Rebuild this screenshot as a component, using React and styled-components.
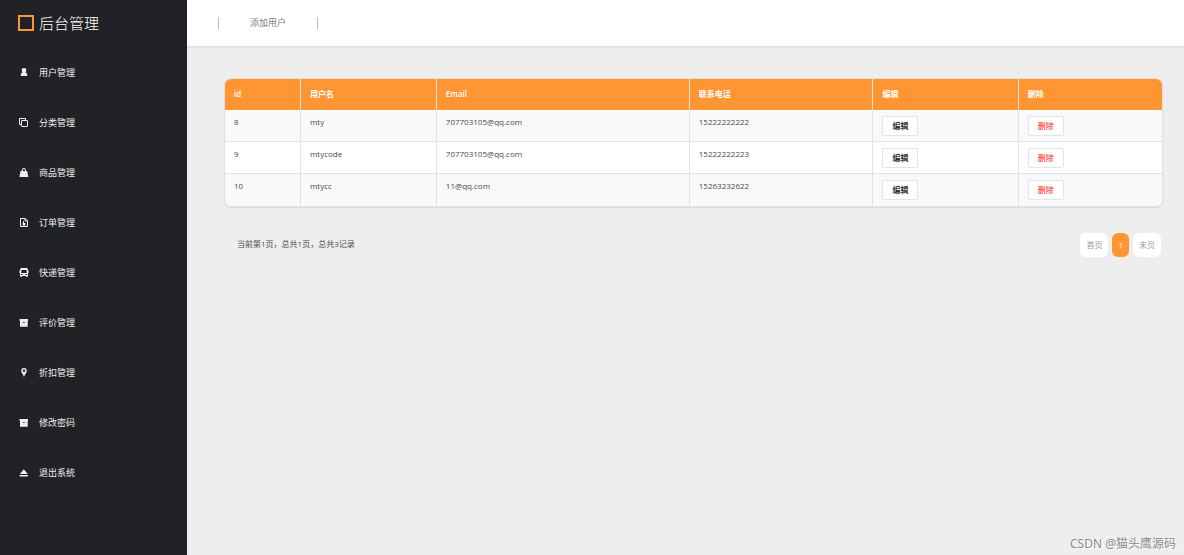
import React from "react";
import styled, { createGlobalStyle, ThemeProvider } from "styled-components";

const theme = {
  primary: "#ff9633",
  sidebar: "#212225",
  bg: "#eeeeee",
  line: "#e2e2e2",
  text: "#4a4a4a",
};

const icons = {
  user: (
    <path d="M5 0c1.500 0 2.300.9 2.300 2.200 0 .9-.3 1.500-.8 2C7.500 4.700 8.200 5.600 8.200 7v1H1.800V7c0-1.400.7-2.300 1.700-2.800-.5-.5-.8-1.100-.8-2C2.700.9 3.500 0 5 0z" />
  ),
  copy: (
    <g fill="none" stroke="currentColor">
      <rect x="2.500" y="2.500" width="6" height="6" rx=".5" />
      <path d="M2.500 6.500h-2v-6h6v2" />
    </g>
  ),
  bag: (
    <path
      fillRule="evenodd"
      d="M2.700 3C2.700 1 3.500 0 4.900 0S7 1 7 3h1.200L9.300 9H.4l1.100-6zm1 0H6c0-1.300-.3-2-1.100-2s-1.200.7-1.200 2z"
    />
  ),
  order: (
    <g>
      <path
        fill="none"
        stroke="currentColor"
        d="M1.500.5h4.700l2.300 2.200v5.800h-7zM6 .5v2.500h2.500"
      />
      <path d="M4 3h1v2h1.500v2.500h-3V5H4z" />
    </g>
  ),
  bus: (
    <path
      fillRule="evenodd"
      d="M2.500 0h5C8.400 0 9 .7 9 1.800v6.200h-.5v1H7V8H3v1H1.500V8H1V1.800C1 .7 1.600 0 2.500 0zM2.600 2L2.200 5h5.600l-.4-3zM2 6v1h1.500V6zm4.500 0v1H8V6zM.4 2.500H1V5H.4zM9 2.500h.6V5H9z"
    />
  ),
  archive: (
    <path
      fillRule="evenodd"
      d="M.5 1H9v2H.5zM1 3h7.700v5.800H1zM3.800 4v.8h2V4z"
    />
  ),
  pin: (
    <path
      fillRule="evenodd"
      d="M5 0c1.700 0 2.800 1.200 2.800 2.800C7.800 4.800 6 6 5 9 4 6 2.200 4.800 2.200 2.800 2.200 1.200 3.300 0 5 0zm0 1.600a1.200 1.200 0 100 2.400 1.200 1.200 0 000-2.400z"
    />
  ),
  eject: <path d="M4.800 1.300L8.800 6H.8zM.7 7h8.200v1.500H.7z" />,
};

const menu = [
  { icon: "user", name: "用户管理" },
  { icon: "copy", name: "分类管理" },
  { icon: "bag", name: "商品管理" },
  { icon: "order", name: "订单管理" },
  { icon: "bus", name: "快递管理" },
  { icon: "archive", name: "评价管理" },
  { icon: "pin", name: "折扣管理" },
  { icon: "archive", name: "修改密码" },
  { icon: "eject", name: "退出系统" },
];

const columns = [
  { name: "id", width: "8%" },
  { name: "用户名", width: "14.5%" },
  { name: "Email", width: "27%" },
  { name: "联系电话", width: "19.6%" },
  { name: "编辑", width: "15.5%" },
  { name: "删除", width: "15.4%" },
];

const users = [
  { id: 8, name: "mty", email: "707703105@qq.com", phone: "15222222222" },
  { id: 9, name: "mtycode", email: "707703105@qq.com", phone: "15222222223" },
  { id: 10, name: "mtycc", email: "11@qq.com", phone: "15263232622" },
];

function App() {
  return (
    <ThemeProvider theme={theme}>
      <GlobalStyle />
      <Layout>
        <Sidebar>
          <Brand>
            <BrandMark />
            后台管理
          </Brand>
          <Menu>
            {menu.map((item) => (
              <li key={item.name}>
                <MenuLink href="#">
                  <svg viewBox="0 0 10 10" aria-hidden="true">
                    {icons[item.icon]}
                  </svg>
                  {item.name}
                </MenuLink>
              </li>
            ))}
          </Menu>
        </Sidebar>
        <Main>
          <Topbar>
            <TopLink href="#">添加用户</TopLink>
          </Topbar>
          <Content>
            <TableCard>
              <Table>
                <thead>
                  <tr>
                    {columns.map((col) => (
                      <Th key={col.name} $width={col.width}>
                        {col.name}
                      </Th>
                    ))}
                  </tr>
                </thead>
                <tbody>
                  {users.map((user) => (
                    <tr key={user.id}>
                      <Td>{user.id}</Td>
                      <Td>{user.name}</Td>
                      <Td>{user.email}</Td>
                      <Td>{user.phone}</Td>
                      <Td>
                        <RowButton type="button">编辑</RowButton>
                      </Td>
                      <Td>
                        <RowButton type="button" $danger>
                          删除
                        </RowButton>
                      </Td>
                    </tr>
                  ))}
                </tbody>
              </Table>
            </TableCard>
            <TableFooter>
              <p>当前第1页，总共1页，总共3记录</p>
              <Pagination>
                <PageLink href="#">首页</PageLink>
                <PageLink href="#" $active>
                  1
                </PageLink>
                <PageLink href="#">末页</PageLink>
              </Pagination>
            </TableFooter>
          </Content>
        </Main>
        <Watermark>CSDN @猫头鹰源码</Watermark>
      </Layout>
    </ThemeProvider>
  );
}

const GlobalStyle = createGlobalStyle`
  * {
    box-sizing: border-box;
    margin: 0;
    padding: 0;
  }

  body {
    background: ${theme.bg};
    color: ${theme.text};
    font-family: "Open Sans", "Noto Sans CJK SC", sans-serif;
    font-size: 8px;
    line-height: 12px;
  }

  a {
    text-decoration: none;
  }

  button {
    font-family: inherit;
    cursor: pointer;
  }
`;

const Layout = styled.div`
  position: relative;
  display: flex;
  min-height: 100vh;
`;

const Sidebar = styled.aside`
  flex: 0 0 187px;
  background: ${(props) => props.theme.sidebar};
`;

const Brand = styled.h1`
  display: flex;
  align-items: center;
  gap: 5px;
  height: 46px;
  padding-left: 18px;
  color: #ffffff;
  font-size: 15px;
  font-weight: 300;
`;

const BrandMark = styled.span`
  width: 16px;
  height: 16px;
  border: 2px solid ${(props) => props.theme.primary};
`;

const Menu = styled.ul`
  list-style: none;
  padding-top: 2px;
`;

const MenuLink = styled.a`
  display: flex;
  align-items: center;
  gap: 10px;
  height: 50px;
  padding-left: 19px;
  color: #eeeeee;
  font-size: 9px;

  svg {
    width: 10px;
    height: 10px;
    fill: currentColor;
  }
`;

const Main = styled.main`
  flex: 1;
  min-width: 0;
`;

const Topbar = styled.nav`
  display: flex;
  align-items: center;
  height: 46px;
  padding-left: 31px;
  background: #ffffff;
  box-shadow: 0 1px 2px rgba(0, 0, 0, 0.1);
`;

const TopLink = styled.a`
  padding: 0 31px;
  border: solid #bbbbbb;
  border-width: 0 1px;
  color: #808080;
  font-size: 9px;
`;

const Content = styled.section`
  padding: 33px 22px 0 38px;
`;

const TableCard = styled.div`
  overflow: hidden;
  border-radius: 6px;
  background: #ffffff;
  box-shadow: 0 0 0 1px #e0e0e0, 0 1px 1px 1px #dddddd;
`;

const Table = styled.table`
  width: 100%;
  table-layout: fixed;
  border-collapse: separate;
  border-spacing: 0;

  tbody tr:nth-child(odd) {
    background: #f9f9f9;
  }

  tbody tr:not(:last-child) td {
    border-bottom: 1px solid ${(props) => props.theme.line};
  }

  th + th,
  td + td {
    border-left: 1px solid ${(props) => props.theme.line};
  }
`;

const Th = styled.th`
  width: ${(props) => props.$width};
  height: 31px;
  padding: 0 9px 2px;
  background: ${(props) => props.theme.primary};
  color: #ffffff;
  font-weight: 600;
  text-align: left;
`;

const Td = styled.td`
  height: 32px;
  padding: 6px 9px 0;
  vertical-align: top;
`;

const RowButton = styled.button`
  display: block;
  height: 20px;
  padding: 0 9px 2px;
  border: 1px solid #e4e4e4;
  border-radius: 2px;
  background: #ffffff;
  color: ${(props) => (props.$danger ? "#ff1111" : "#333333")};
  font-size: 8px;
  font-weight: ${(props) => (props.$danger ? 400 : 600)};
`;

const TableFooter = styled.footer`
  display: flex;
  justify-content: space-between;
  padding: 27px 1px 0 12px;

  p {
    padding-top: 5px;
  }
`;

const Pagination = styled.nav`
  display: flex;
  gap: 4px;
`;

const PageLink = styled.a`
  padding: 6px;
  border-radius: 6px;
  background: ${(props) =>
    props.$active ? props.theme.primary : "#ffffff"};
  color: ${(props) => (props.$active ? "#ffffff" : "#999999")};
`;

const Watermark = styled.span`
  position: absolute;
  right: 8px;
  bottom: 2px;
  color: #8c8c8c;
  font-family: "Noto Sans", "Noto Sans CJK SC", sans-serif;
  font-size: 12px;
  line-height: 18px;
  text-shadow: 1px 1px 0 #ffffff;
`;

export default App;
